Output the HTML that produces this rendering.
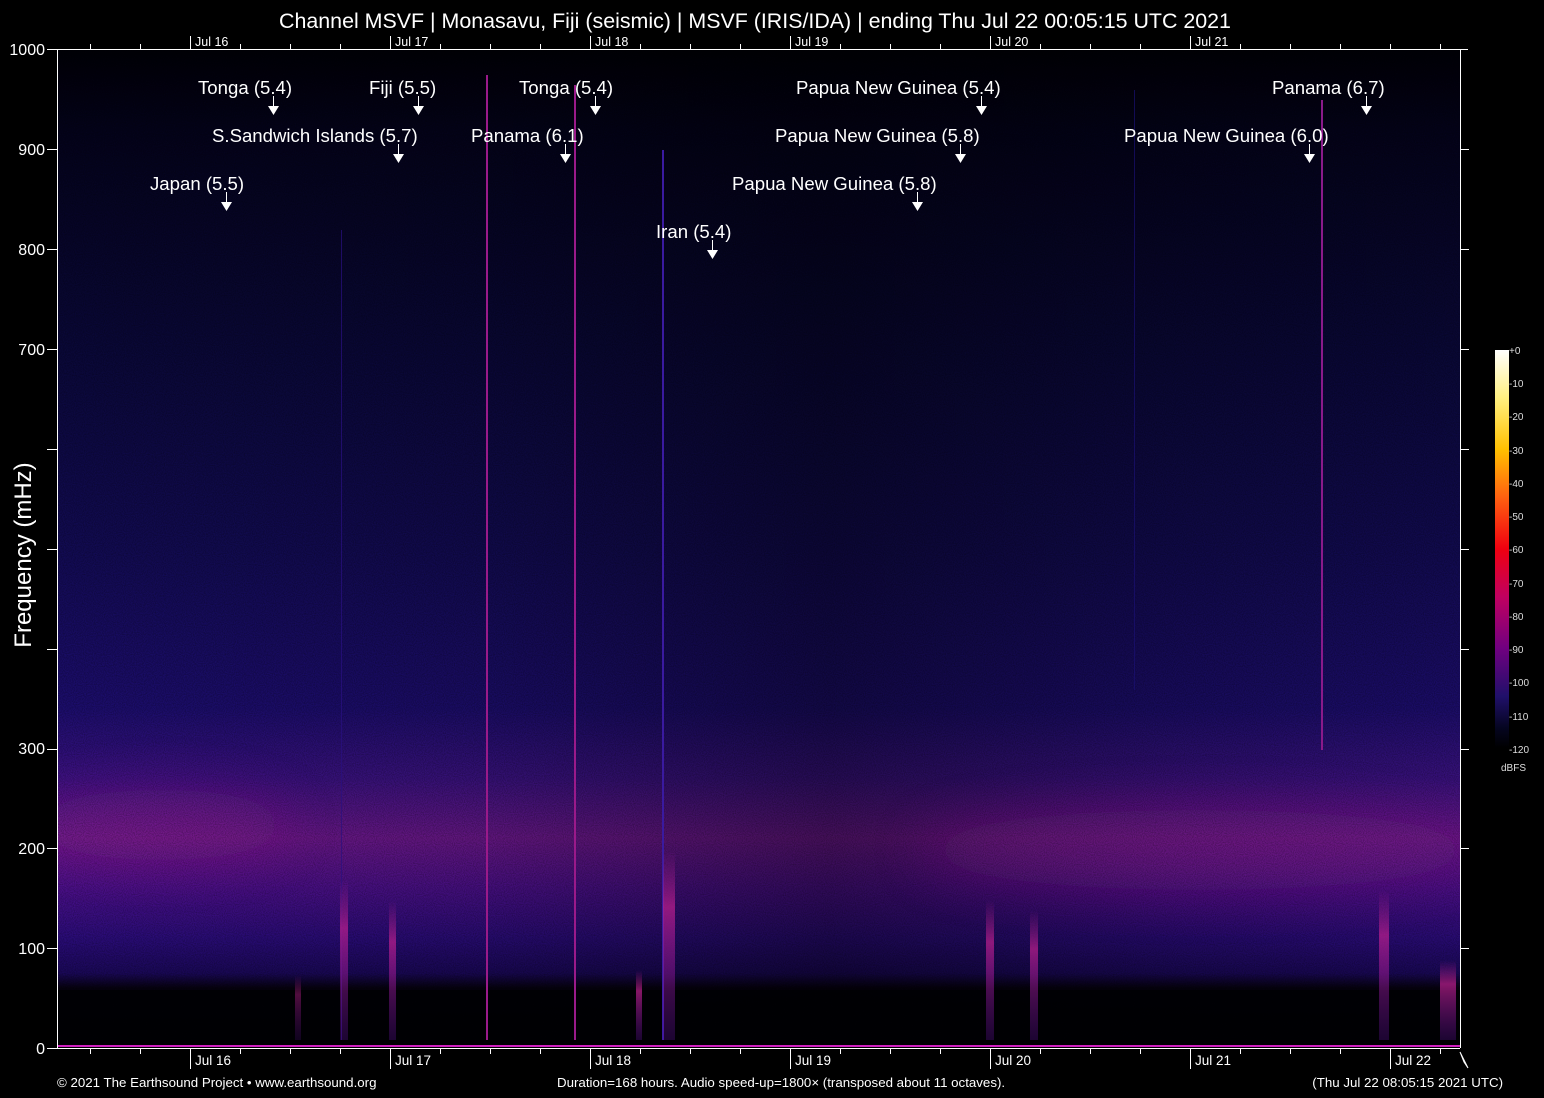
<!DOCTYPE html>
<html><head><meta charset="utf-8"><style>
html,body{margin:0;padding:0;background:#000;width:1544px;height:1098px;overflow:hidden}
svg{display:block;font-family:"Liberation Sans",sans-serif}
</style></head><body>
<svg width="1544" height="1098" viewBox="0 0 1544 1098" xmlns="http://www.w3.org/2000/svg">
<defs>
<linearGradient id="vg" x1="0" y1="49" x2="0" y2="1048" gradientUnits="userSpaceOnUse">
<stop offset="0" stop-color="#010006"/>
<stop offset="0.08" stop-color="#04031a"/>
<stop offset="0.3" stop-color="#0a0838"/>
<stop offset="0.5" stop-color="#120b52"/>
<stop offset="0.66" stop-color="#1c0d6c"/>
<stop offset="0.73" stop-color="#3a1280"/>
<stop offset="0.79" stop-color="#6a188a"/>
<stop offset="0.84" stop-color="#4a1088"/>
<stop offset="0.89" stop-color="#2a0c78"/>
<stop offset="0.925" stop-color="#1a0858"/>
<stop offset="0.94" stop-color="#06020f"/>
<stop offset="1" stop-color="#010004"/>
</linearGradient>
<linearGradient id="hg" x1="57" y1="0" x2="1460" y2="0" gradientUnits="userSpaceOnUse">
<stop offset="0" stop-color="#000" stop-opacity="0"/>
<stop offset="0.3" stop-color="#000" stop-opacity="0.1"/>
<stop offset="0.55" stop-color="#000" stop-opacity="0.35"/>
<stop offset="0.8" stop-color="#000" stop-opacity="0.15"/>
<stop offset="1" stop-color="#000" stop-opacity="0.05"/>
</linearGradient>
<linearGradient id="cb" x1="0" y1="350" x2="0" y2="748" gradientUnits="userSpaceOnUse">
<stop offset="0" stop-color="#ffffff"/>
<stop offset="0.12" stop-color="#fff080"/>
<stop offset="0.25" stop-color="#ffc000"/>
<stop offset="0.37" stop-color="#ff6010"/>
<stop offset="0.5" stop-color="#f00010"/>
<stop offset="0.62" stop-color="#c00060"/>
<stop offset="0.75" stop-color="#700080"/>
<stop offset="0.87" stop-color="#20106a"/>
<stop offset="0.95" stop-color="#050520"/>
<stop offset="1" stop-color="#000"/>
</linearGradient>
<filter id="nz"><feTurbulence type="fractalNoise" baseFrequency="0.9" numOctaves="1" seed="3"/><feColorMatrix values="0 0 0 0 0  0 0 0 0 0  0 0 0 0 0  0 0 0 1.2 -0.4"/></filter>
<filter id="bl" x="-50%" y="-100%" width="200%" height="300%"><feGaussianBlur stdDeviation="25"/></filter>
<linearGradient id="blob" x1="0" y1="0" x2="0" y2="1"><stop offset="0" stop-color="#b02090" stop-opacity="0"/><stop offset="0.3" stop-color="#c02090" stop-opacity="0.7"/><stop offset="1" stop-color="#6010a0" stop-opacity="0.3"/></linearGradient>
<clipPath id="pc"><rect x="57" y="49" width="1403" height="999"/></clipPath>
</defs>
<rect x="57" y="49" width="1403" height="999" fill="url(#vg)"/>
<rect x="57" y="49" width="1403" height="999" fill="url(#hg)"/>
<g clip-path="url(#pc)" filter="url(#bl)">
<ellipse cx="1200" cy="850" rx="280" ry="40" fill="#8a1a90" opacity="0.35"/>
<ellipse cx="160" cy="825" rx="130" ry="35" fill="#9a1a90" opacity="0.3"/>
</g>
<rect x="57" y="990" width="1403" height="56" fill="#010004" opacity="0.9"/>
<rect x="57" y="49" width="1403" height="999" filter="url(#nz)" opacity="0.5"/>
<rect x="486" y="75" width="2" height="965" fill="#9a1a8a"/>
<rect x="574" y="85" width="2" height="955" fill="#9a1a8a"/>
<rect x="662" y="150" width="2" height="890" fill="#3a1aa0"/>
<rect x="1321" y="100" width="2" height="650" fill="#8a1a8a"/>
<rect x="341" y="230" width="1" height="810" fill="#2a1080" opacity="0.7"/>
<rect x="1134" y="90" width="1" height="600" fill="#1a1070" opacity="0.7"/>
<rect x="663" y="850" width="12" height="190" fill="url(#blob)"/>
<rect x="340" y="880" width="8" height="160" fill="url(#blob)"/>
<rect x="389" y="900" width="7" height="140" fill="url(#blob)"/>
<rect x="636" y="970" width="6" height="70" fill="url(#blob)"/>
<rect x="986" y="900" width="8" height="140" fill="url(#blob)"/>
<rect x="1030" y="910" width="8" height="130" fill="url(#blob)"/>
<rect x="1379" y="890" width="10" height="150" fill="url(#blob)"/>
<rect x="1440" y="960" width="16" height="80" fill="url(#blob)"/>
<rect x="295" y="975" width="6" height="65" fill="url(#blob)" opacity="0.6"/>
<rect x="57" y="1045" width="1403" height="2" fill="#d020c0"/>
<g stroke="#fff" stroke-width="1" fill="none">
<path d="M57.5 49V1048.5 M57 49.5H1468 M57 1048.5H1460"/>
<path d="M1460.5 49V1048"/>
<path d="M47 49.5H57 M47 149.5H57 M47 249.5H57 M47 349.5H57 M47 449.5H57 M47 549.5H57 M47 649.5H57 M47 749.5H57 M47 848.5H57 M47 948.5H57 M47 1048.5H57"/>
<path d="M1460 149.5H1469 M1460 249.5H1469 M1460 349.5H1469 M1460 449.5H1469 M1460 549.5H1469 M1460 649.5H1469 M1460 749.5H1469 M1460 848.5H1469 M1460 948.5H1469"/>
<path d="M90.5 49V44 M140.5 49V44 M190.5 49V36 M240.5 49V44 M290.5 49V44 M340.5 49V44 M390.5 49V36 M440.5 49V44 M490.5 49V44 M540.5 49V44 M590.5 49V36 M640.5 49V44 M690.5 49V44 M740.5 49V44 M790.5 49V36 M840.5 49V44 M890.5 49V44 M940.5 49V44 M990.5 49V36 M1040.5 49V44 M1090.5 49V44 M1140.5 49V44 M1190.5 49V36 M1240.5 49V44 M1290.5 49V44 M1340.5 49V44 M1390.5 49V44 M1440.5 49V44"/>
<path d="M90.5 1048V1054 M140.5 1048V1054 M190.5 1048V1069 M240.5 1048V1054 M290.5 1048V1054 M340.5 1048V1054 M390.5 1048V1069 M440.5 1048V1054 M490.5 1048V1054 M540.5 1048V1054 M590.5 1048V1069 M640.5 1048V1054 M690.5 1048V1054 M740.5 1048V1054 M790.5 1048V1069 M840.5 1048V1054 M890.5 1048V1054 M940.5 1048V1054 M990.5 1048V1069 M1040.5 1048V1054 M1090.5 1048V1054 M1140.5 1048V1054 M1190.5 1048V1069 M1240.5 1048V1054 M1290.5 1048V1054 M1340.5 1048V1054 M1390.5 1048V1069 M1440.5 1048V1054"/>
</g>
<g fill="#fff" font-size="12.5">
<text x="195" y="46">Jul 16</text><text x="395" y="46">Jul 17</text><text x="595" y="46">Jul 18</text><text x="795" y="46">Jul 19</text><text x="995" y="46">Jul 20</text><text x="1195" y="46">Jul 21</text>
</g>
<g fill="#fff" font-size="13.5">
<text x="195" y="1065">Jul 16</text><text x="395" y="1065">Jul 17</text><text x="595" y="1065">Jul 18</text><text x="795" y="1065">Jul 19</text><text x="995" y="1065">Jul 20</text><text x="1195" y="1065">Jul 21</text><text x="1395" y="1065">Jul 22</text>
</g>
<path d="M1460 1052L1468 1068L1464 1062Z" fill="#fff" stroke="#fff"/>
<g fill="#fff" font-size="16" text-anchor="end">
<text x="45" y="55">1000</text><text x="45" y="155">900</text><text x="45" y="255">800</text><text x="45" y="355">700</text><text x="45" y="754">300</text><text x="45" y="854">200</text><text x="45" y="954">100</text><text x="45" y="1054">0</text>
</g>
<text transform="translate(31 555) rotate(-90)" fill="#fff" font-size="24" text-anchor="middle">Frequency (mHz)</text>
<text x="755" y="28" fill="#fff" font-size="21.4" text-anchor="middle">Channel MSVF | Monasavu, Fiji (seismic) | MSVF (IRIS/IDA) | ending Thu Jul 22 00:05:15 UTC 2021</text>
<g fill="#fff" font-size="18.6">
<text x="198" y="94">Tonga (5.4)</text>
<text x="369" y="94">Fiji (5.5)</text>
<text x="519" y="94">Tonga (5.4)</text>
<text x="796" y="94">Papua New Guinea (5.4)</text>
<text x="1272" y="94">Panama (6.7)</text>
<text x="212" y="142">S.Sandwich Islands (5.7)</text>
<text x="471" y="142">Panama (6.1)</text>
<text x="775" y="142">Papua New Guinea (5.8)</text>
<text x="1124" y="142">Papua New Guinea (6.0)</text>
<text x="150" y="190">Japan (5.5)</text>
<text x="732" y="190">Papua New Guinea (5.8)</text>
<text x="656" y="238">Iran (5.4)</text>
</g>
<g fill="#fff" stroke="#fff" stroke-width="1">
<path d="M273.5 96V108 M418.5 96V108 M595.5 96V108 M981.5 96V108 M1366.5 96V108 M398.5 144V156 M565.5 144V156 M960.5 144V156 M1309.5 144V156 M226.5 192V204 M917.5 192V204 M712.5 240V252"/>
<path d="M268 106H279L273.5 115Z M413 106H424L418.5 115Z M590 106H601L595.5 115Z M976 106H987L981.5 115Z M1361 106H1372L1366.5 115Z M393 154H404L398.5 163Z M560 154H571L565.5 163Z M955 154H966L960.5 163Z M1304 154H1315L1309.5 163Z M221 202H232L226.5 211Z M912 202H923L917.5 211Z M707 250H718L712.5 259Z" stroke="none"/>
</g>
<rect x="1495" y="350" width="14" height="398" fill="url(#cb)"/>
<g fill="#ddd" font-size="10">
<text x="1509" y="354">+0</text><text x="1509" y="387">-10</text><text x="1509" y="420">-20</text><text x="1509" y="454">-30</text><text x="1509" y="487">-40</text><text x="1509" y="520">-50</text><text x="1509" y="553">-60</text><text x="1509" y="587">-70</text><text x="1509" y="620">-80</text><text x="1509" y="653">-90</text><text x="1509" y="686">-100</text><text x="1509" y="720">-110</text><text x="1509" y="753">-120</text>
<text x="1501" y="771">dBFS</text>
</g>
<g fill="#fff" font-size="13.3">
<text x="57" y="1087">© 2021 The Earthsound Project • www.earthsound.org</text>
<text x="557" y="1087">Duration=168 hours. Audio speed-up=1800× (transposed about 11 octaves).</text>
<text x="1503" y="1087" text-anchor="end">(Thu Jul 22 08:05:15 2021 UTC)</text>
</g>
</svg>
</body></html>
